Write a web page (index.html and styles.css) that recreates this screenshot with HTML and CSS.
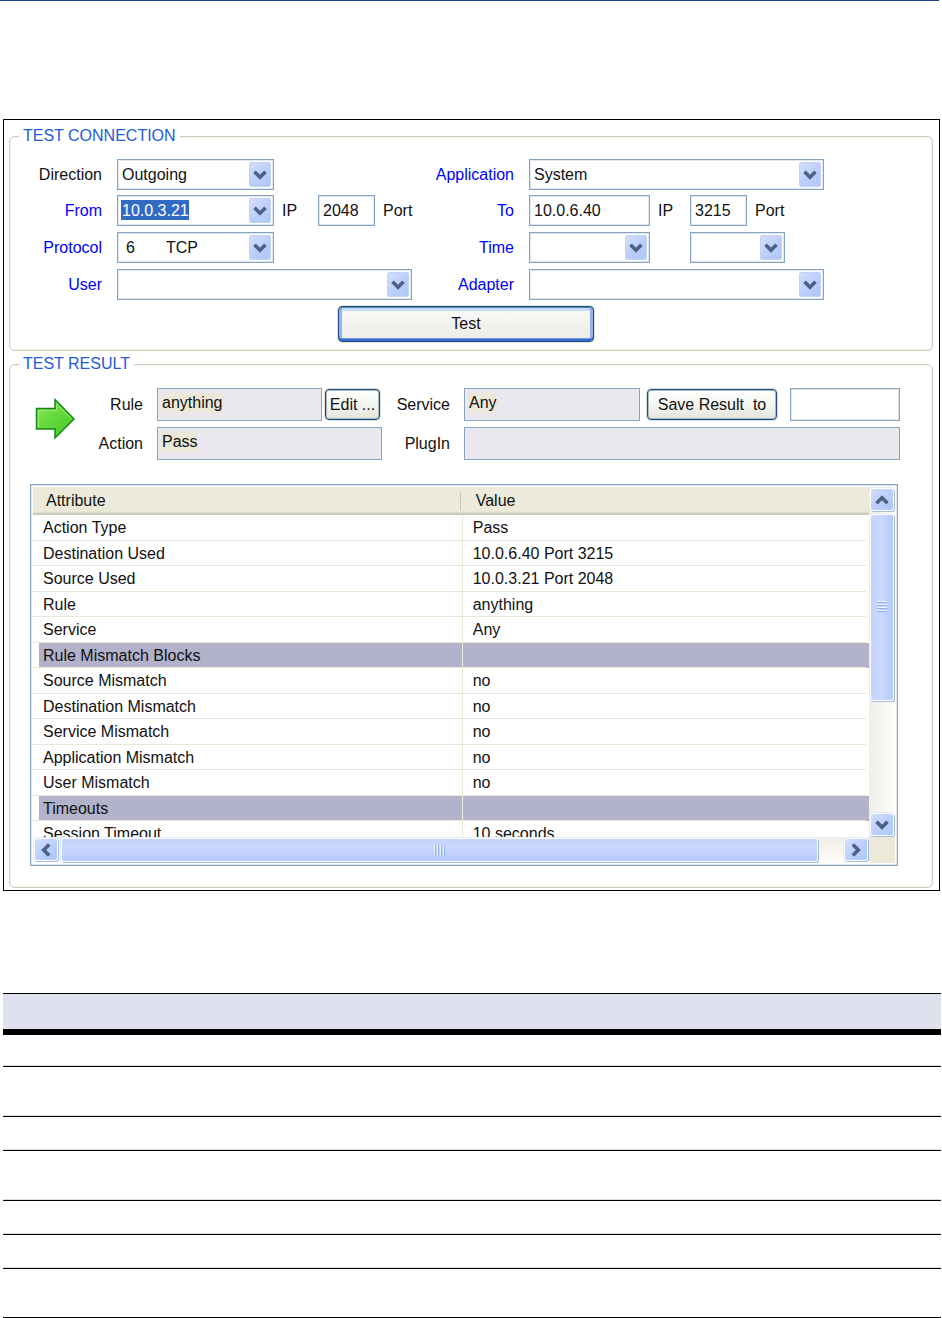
FILE: index.html
```html
<!DOCTYPE html>
<html lang="en">
<head>
<meta charset="utf-8">
<meta name="viewport" content="width=device-width, initial-scale=1">
<title>Test Connection</title>
<link rel="stylesheet" href="styles.css">
</head>
<body>
<svg class="defs" aria-hidden="true">
  <symbol id="chevron" viewBox="0 0 14 10"><path d="M1.5 1.8 7 7.3l5.5-5.5" fill="none" stroke="#4d6185" stroke-width="3.6"/></symbol>
</svg>
<header class="page-rule"></header>
<main>
  <form class="frame">
    <fieldset class="group">
      <legend>TEST CONNECTION</legend>
      <div class="connection">
        <label for="direction">Direction</label>
        <div class="fields">
          <div class="combo medium"><select id="direction"><option>Outgoing</option></select><span class="drop"><svg><use href="#chevron"/></svg></span></div>
        </div>
        <label class="link" for="application">Application</label>
        <div class="fields">
          <div class="combo wide"><select id="application"><option>System</option></select><span class="drop"><svg><use href="#chevron"/></svg></span></div>
        </div>

        <label class="link" for="from">From</label>
        <div class="fields">
          <div class="combo medium"><input id="from" class="highlighted" type="text" value="10.0.3.21"><button type="button" class="drop" aria-label="Show addresses"><svg><use href="#chevron"/></svg></button></div>
          <span class="unit">IP</span>
          <input id="from-port" class="port" type="text" value="2048">
          <label for="from-port">Port</label>
        </div>
        <label class="link" for="to">To</label>
        <div class="fields">
          <input id="to" class="address" type="text" value="10.0.6.40">
          <span class="unit narrow">IP</span>
          <input id="to-port" class="port" type="text" value="3215">
          <label for="to-port">Port</label>
        </div>

        <label class="link" for="protocol">Protocol</label>
        <div class="fields">
          <div class="combo medium indented"><select id="protocol"><option>6&nbsp;&nbsp;&nbsp;&nbsp;&nbsp;&nbsp;&nbsp;TCP</option></select><span class="drop"><svg><use href="#chevron"/></svg></span></div>
        </div>
        <label class="link" for="time">Time</label>
        <div class="fields times">
          <div class="combo address"><select id="time"><option></option></select><span class="drop"><svg><use href="#chevron"/></svg></span></div>
          <div class="combo short"><select aria-label="Time of day"><option></option></select><span class="drop"><svg><use href="#chevron"/></svg></span></div>
        </div>

        <label class="link" for="user">User</label>
        <div class="fields">
          <div class="combo wide"><select id="user"><option></option></select><span class="drop"><svg><use href="#chevron"/></svg></span></div>
        </div>
        <label class="link" for="adapter">Adapter</label>
        <div class="fields">
          <div class="combo wide"><select id="adapter"><option></option></select><span class="drop"><svg><use href="#chevron"/></svg></span></div>
        </div>
      </div>
      <div class="actions"><button type="button" class="button default">Test</button></div>
    </fieldset>

    <fieldset class="group">
      <legend>TEST RESULT</legend>
      <div class="result">
        <svg class="arrow" viewBox="0 0 42 44" aria-hidden="true">
          <defs>
            <linearGradient id="green" x1="0" y1="0" x2="1" y2="1">
              <stop offset="0" stop-color="#8be35a"/><stop offset=".5" stop-color="#62d93c"/><stop offset="1" stop-color="#3fc51f"/>
            </linearGradient>
          </defs>
          <path d="M2.5 12.5H21V3.5L40 23 21 42V33H2.5Z" fill="url(#green)" stroke="#14891c" stroke-width="1.5"/>
          <path d="M4.5 31V14.500H22.5V7.5L37.5 23" fill="none" stroke="#9be873" stroke-width="1"/>
        </svg>
        <label for="rule">Rule</label>
        <div class="line tight">
          <output id="rule" class="readout"><span>anything</span></output>
          <button type="button" class="button edit">Edit ...</button>
        </div>
        <label for="service">Service</label>
        <div class="line">
          <output id="service" class="readout"><span>Any</span></output>
          <button type="button" class="button save">Save Result&nbsp; to</button>
          <input class="target" type="text" aria-label="Save target">
        </div>
        <label for="action">Action</label>
        <div class="line"><output id="action" class="readout"><span>Pass</span></output></div>
        <label for="plugin">PlugIn</label>
        <div class="line"><output id="plugin" class="readout"></output></div>
      </div>

      <div class="list">
        <div class="viewport">
          <table class="attributes">
            <thead><tr><th scope="col">Attribute</th><th scope="col">Value</th></tr></thead>
            <tbody>
              <tr><td>Action Type</td><td>Pass</td></tr>
              <tr><td>Destination Used</td><td>10.0.6.40 Port 3215</td></tr>
              <tr><td>Source Used</td><td>10.0.3.21 Port 2048</td></tr>
              <tr><td>Rule</td><td>anything</td></tr>
              <tr><td>Service</td><td>Any</td></tr>
              <tr class="section"><td>Rule Mismatch Blocks</td><td></td></tr>
              <tr><td>Source Mismatch</td><td>no</td></tr>
              <tr><td>Destination Mismatch</td><td>no</td></tr>
              <tr><td>Service Mismatch</td><td>no</td></tr>
              <tr><td>Application Mismatch</td><td>no</td></tr>
              <tr><td>User Mismatch</td><td>no</td></tr>
              <tr class="section"><td>Timeouts</td><td></td></tr>
              <tr><td>Session Timeout</td><td>10 seconds</td></tr>
            </tbody>
          </table>
        </div>
        <div class="scrollbar vertical">
          <button type="button" class="step" aria-label="Scroll up"><svg class="up"><use href="#chevron"/></svg></button>
          <div class="thumb"><span class="grip"></span></div>
          <div class="track"></div>
          <button type="button" class="step" aria-label="Scroll down"><svg><use href="#chevron"/></svg></button>
        </div>
        <div class="scrollbar horizontal">
          <button type="button" class="step" aria-label="Scroll left"><svg class="left"><use href="#chevron"/></svg></button>
          <div class="thumb"><span class="grip"></span></div>
          <div class="track"></div>
          <button type="button" class="step" aria-label="Scroll right"><svg class="right"><use href="#chevron"/></svg></button>
        </div>
        <div class="corner"></div>
      </div>
    </fieldset>
  </form>

  <table class="ruled">
    <thead><tr><td></td></tr></thead>
    <tbody>
      <tr class="first"><td></td></tr>
      <tr class="tall"><td></td></tr>
      <tr><td></td></tr>
      <tr class="tall"><td></td></tr>
      <tr><td></td></tr>
      <tr><td></td></tr>
      <tr class="last"><td></td></tr>
    </tbody>
  </table>
</main>
</body>
</html>
```
FILE: styles.css
```css
* {
  box-sizing: border-box;
}

body {
  margin: 0;
  background: #fff;
  color: #111;
  font: 16px/20px "Liberation Sans", Arial, sans-serif;
}

.defs {
  display: none;
}

.page-rule {
  height: 1px;
  margin-right: 3px;
  background: #1c4587;
}

main {
  padding: 118px 1px 0 3px;
}

.frame {
  margin-right: 1px;
  padding: 7px 6px 2px 5px;
  border: 1px solid #000;
}

.group {
  min-width: 0;
  margin: 0 0 4px;
  padding: 0;
  border: 1px solid #d0d0bf;
  border-radius: 5px;
  box-shadow: inset 0 0 0 1px #f3f3ec;
}

.group:last-child {
  margin-bottom: 0;
}

legend {
  margin-left: 9px;
  padding: 0 4px;
  background: #fff;
  color: #1f5bdc;
  line-height: 18px;
}

input,
select,
button {
  margin: 0;
  color: inherit;
  font: inherit;
}

input,
select,
.readout {
  min-width: 0;
  border: 1px solid #86a4c0;
  border-radius: 0;
  background: #fff;
  box-shadow: inset 0 0 0 1px #dfe8f0;
}

/* Connection form */

.connection {
  display: grid;
  grid-template-columns: 92px 297fr 85px 403fr;
  grid-template-rows: 31px 31px 33px 31px;
  gap: 5px 15px;
  align-items: center;
  padding-top: 14px;
}

.connection > label,
.result > label {
  text-align: right;
}

.link {
  color: #00f;
}

.fields {
  display: flex;
  align-items: center;
  gap: 8px;
  min-width: 0;
}

.fields input {
  height: 31px;
  padding: 0 4px;
}

.times {
  gap: 40px;
}

.combo {
  position: relative;
}

.combo select,
.combo input {
  display: block;
  width: 100%;
  height: 31px;
  padding: 0 28px 0 4px;
  appearance: none;
}

.combo.indented select {
  padding-left: 8px;
}

.medium {
  width: 157px;
}

.wide {
  width: 295px;
}

.short {
  width: 95px;
}

.address {
  width: 121px;
}

.port {
  width: 57px;
}

.unit {
  width: 28px;
}

.unit.narrow {
  width: 24px;
}

.combo .highlighted {
  background: linear-gradient(#316ac5, #316ac5) 3px 4px / 68px 20px no-repeat #fff;
  color: #fff;
}

.drop {
  position: absolute;
  top: 3px;
  right: 3px;
  display: grid;
  place-items: center;
  width: 22px;
  height: 25px;
  padding: 0;
  border: 1px solid #c3d1f5;
  border-radius: 2px;
  background: linear-gradient(135deg, #d3defd, #b9cdfb 60%, #adc8f8);
  pointer-events: none;
}

.drop svg,
.step svg {
  width: 14px;
  height: 10px;
}

.actions {
  display: flex;
  justify-content: center;
  padding: 6px 10px 8px 0;
}

.button {
  height: 31px;
  padding: 0;
  border: 1px solid #164a7d;
  border-radius: 4px;
  background: linear-gradient(#fff, #f3f3ee 60%, #e3e2da);
  box-shadow: 0 0 0 1px #dfe0d8, inset 0 0 0 1px #a9bccb;
  white-space: nowrap;
}

.button.default {
  width: 256px;
  height: 36px;
  border-color: #1d5082;
  background: linear-gradient(#f9f9f6, #ecece5);
  box-shadow: 0 0 0 1px #e6e4d6, inset 0 1px 0 #5585b5, inset 0 -2px 0 #3d68cc, inset 0 -3px 0 #7299e4, inset 3px 0 0 #93b5ee, inset -3px 0 0 #93b5ee, inset 0 4px 0 #c5dcf8;
}

/* Result summary */

.result {
  display: grid;
  grid-template-columns: 42px 53px 225fr 54px 436fr;
  gap: 6px 14px;
  align-items: center;
  padding: 15px 32px 0 24px;
}

.arrow {
  grid-row: span 2;
  align-self: start;
  width: 42px;
  height: 44px;
  margin-top: 8px;
}

.line {
  display: flex;
  align-items: center;
  gap: 7px;
  min-width: 0;
}

.line.tight {
  gap: 3px;
  padding-right: 2px;
}

.readout {
  flex: 1;
  height: 33px;
  padding: 4px;
  background: #eae8ee;
  box-shadow: none;
}

.readout span {
  display: inline-block;
  background: #ebe8d9;
}

.edit {
  width: 55px;
}

.save {
  width: 130px;
}

.target {
  width: 110px;
  height: 33px;
  margin-left: 6px;
}

/* Attribute list */

.list {
  display: grid;
  grid-template-columns: 1fr 26px;
  grid-template-rows: 350px 26px;
  margin: 24px 34px 21px 20px;
  padding: 2px;
  border: 1px solid #86a4c0;
  box-shadow: inset 0 0 0 1px #dfe8f0;
}

.viewport {
  overflow: hidden;
}

.attributes {
  width: 100%;
  border-spacing: 0;
  table-layout: fixed;
}

.attributes th,
.attributes td {
  padding: 0 10px;
  text-align: left;
}

.attributes th {
  height: 28px;
  padding-left: 13px;
  background: linear-gradient(#ebeadb 24px, #d8d5c6 26px, #c5c2b3);
  font-weight: normal;
}

.attributes th:first-child {
  width: 51.4%;
  background: linear-gradient(#c9c6b5, #c9c6b5) right 2px top 5px / 1px 18px no-repeat, linear-gradient(#ebeadb 24px, #d8d5c6 26px, #c5c2b3);
}

/* Row lines end just short of the scroll bar */
.attributes td {
  height: 25px;
  background: linear-gradient(#e9e6d6, #e9e6d6) left bottom / 100% 1px no-repeat;
}

.attributes td:last-child {
  background-size: calc(100% - 3px) 1px;
}

.attributes tr:nth-child(odd) td {
  height: 26px;
}

.attributes td:first-child {
  border-right: 1px solid #ece9d8;
}

.attributes .section td {
  background-color: #b3b2cb;
}

.attributes .section td:first-child {
  background: linear-gradient(#e9e6d6, #e9e6d6) left bottom / 100% 1px no-repeat, linear-gradient(90deg, #fff 6px, #b3b2cb 6px);
}

.scrollbar {
  display: flex;
  gap: 3px;
  padding: 1px;
}

.vertical {
  flex-direction: column;
  background: linear-gradient(90deg, #efeee8, #fefefa);
}

.horizontal {
  background: linear-gradient(#efeee8, #fefefa);
}

.step,
.thumb {
  display: grid;
  place-items: center;
  padding: 0;
  border: 1px solid #fff;
  border-radius: 3px;
  box-shadow: 1px 1px 0 #9fbbe6, 0 0 0 1px #e3ebf8;
}

.step {
  flex: none;
  width: 24px;
  height: 23px;
  background: linear-gradient(135deg, #d3defd, #b9cdfb 60%, #adc8f8);
}

.vertical .thumb {
  flex: 188;
  background: linear-gradient(90deg, #c4d3fc, #cad8fd 50%, #b3cafa);
}

.vertical .track {
  flex: 108;
}

.horizontal .thumb {
  flex: 761;
  background: linear-gradient(#c4d3fc, #cad8fd 40%, #b3cafa);
}

.horizontal .track {
  flex: 20;
}

.up {
  transform: rotate(180deg);
}

.left {
  transform: rotate(90deg);
}

.right {
  transform: rotate(-90deg);
}

.grip {
  width: 10px;
  height: 12px;
  background: repeating-linear-gradient(#eef4fe 0 1px, #8cb0f8 1px 2px, transparent 2px 3px);
}

.horizontal .grip {
  width: 12px;
  height: 10px;
  background: repeating-linear-gradient(90deg, #eef4fe 0 1px, #8cb0f8 1px 2px, transparent 2px 3px);
}

.corner {
  background: #ece9d8;
}

/* Empty ruled table */

.ruled {
  width: 100%;
  margin-top: 102px;
  border-spacing: 0;
}

.ruled td {
  height: 34px;
  padding: 0;
  border-bottom: 1px solid #000;
  box-shadow: inset 0 -1px 0 #dcdcdc;
}

.ruled thead td {
  height: 42px;
  border-top: 1px solid #000;
  border-bottom-width: 6px;
  background: #dfe1ef;
  box-shadow: none;
}

.ruled .first td {
  height: 32px;
}

.ruled .tall td {
  height: 50px;
}

.ruled .last td {
  height: 49px;
  box-shadow: none;
}
```
